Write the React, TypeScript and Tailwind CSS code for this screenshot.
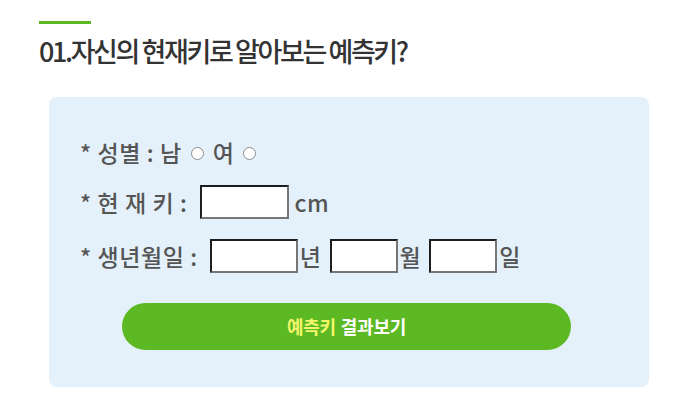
export default function App() {
  const font = { fontFamily: '"Noto Sans CJK KR", "Noto Sans", sans-serif' };
  const inputCls =
    "h-[34px] bg-white border-2 border-t-[#1e1e1e] border-l-[#1e1e1e] border-r-[#767676] border-b-[#767676] outline-none";
  const radio = (
    <span className="inline-block w-[13px] h-[13px] rounded-full border border-[#8d8d8d] bg-white" />
  );

  return (
    <div className="w-[673px] h-[401px] bg-white pt-[21px] pl-[39px]" style={font}>
      <div className="w-[52px] h-[3px] bg-[#5cb923]" />
      <h2 className="mt-[7px] h-[40px] text-[27px] leading-[40px] tracking-[-2.4px] text-[#333] font-medium">
        01.자신의 현재키로 알아보는 예측키?
      </h2>

      <div className="ml-[10px] mt-[26px] w-[600px] h-[290px] rounded-[8px] bg-[#e4f1fb] pt-[38px] pl-[31px] text-[23px] tracking-[0.6px] text-[#555] font-medium">
        <div className="h-[34px] flex items-center">
          <span>* 성별 : 남</span>
          <span className="ml-[9px] mt-[3px] flex">{radio}</span>
          <span className="ml-[9px]">여</span>
          <span className="ml-[8px] mt-[3px] flex">{radio}</span>
        </div>

        <div className="mt-[16px] h-[34px] flex items-center">
          <span>* 현 재 키 :</span>
          <input type="text" className={`${inputCls} ml-[12px] w-[89px]`} />
          <span className="ml-[6px]">cm</span>
        </div>

        <div className="mt-[20px] h-[34px] flex items-center">
          <span>* 생년월일 :</span>
          <input type="text" className={`${inputCls} ml-[12px] w-[88px]`} />
          <span className="ml-[2px]">년</span>
          <input type="text" className={`${inputCls} ml-[8px] w-[68px]`} />
          <span className="ml-[2px]">월</span>
          <input type="text" className={`${inputCls} ml-[8px] w-[68px]`} />
          <span className="ml-[2px]">일</span>
        </div>

        <button
          type="button"
          className="mt-[30px] ml-[42px] w-[449px] h-[47px] rounded-full bg-[#5cb923] text-[18px] font-bold tracking-[-0.3px] flex items-center justify-center"
        >
          <span className="text-[#f3f66d]">예측키</span>
          <span className="ml-[5px] text-white">결과보기</span>
        </button>
      </div>
    </div>
  );
}
